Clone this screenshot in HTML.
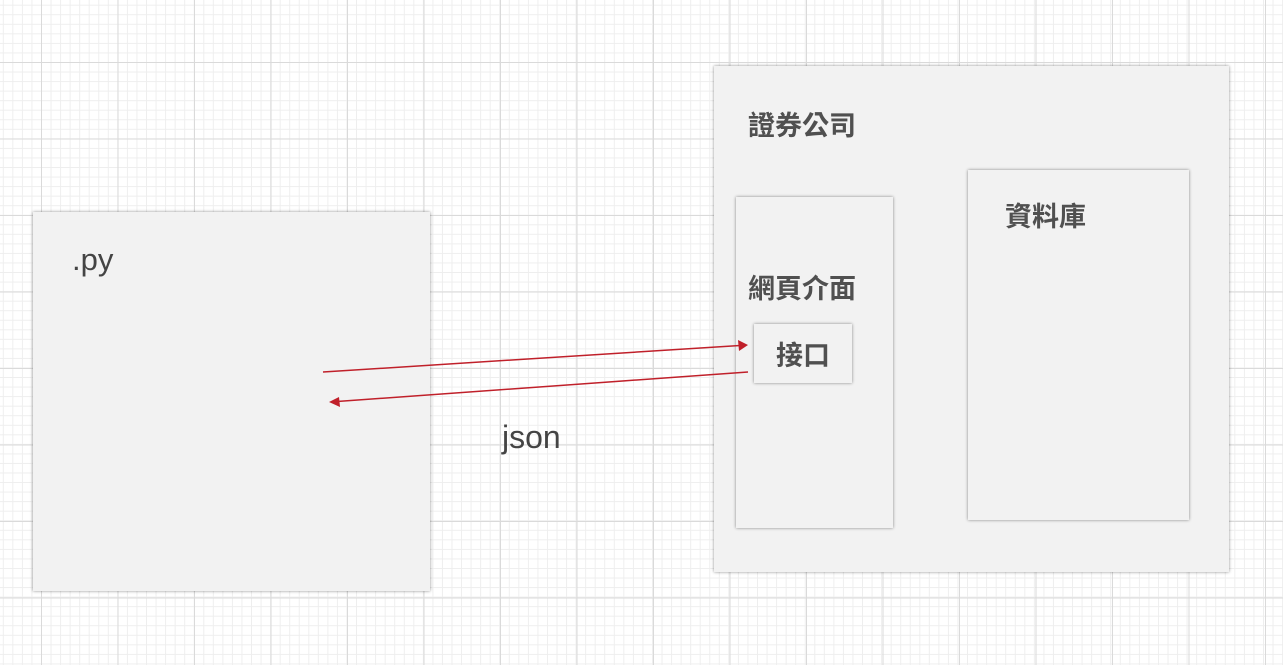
<html><head><style>
body{margin:0;width:1283px;height:665px;overflow:hidden;position:relative;font-family:"Liberation Sans","Noto Sans CJK TC",sans-serif;color:#444;
background-color:#fff;
background-image:linear-gradient(#dadada 1px,transparent 1px),linear-gradient(90deg,#dadada 1px,transparent 1px),linear-gradient(#eeeeee 1px,transparent 1px),linear-gradient(90deg,#eeeeee 1px,transparent 1px);
background-size:76.5px 76.5px,76.5px 76.5px,9.56px 9.56px,9.56px 9.56px;
background-position:41px 62px,41px 62px,41px 62px,41px 62px;}
.b{position:absolute;background:#f2f2f2;box-shadow:0 0 3px rgba(0,0,0,.45);}
.t{position:absolute;font-size:27px;font-weight:600;line-height:1;white-space:nowrap;color:#505050}
</style></head><body>
<div class="b" style="left:33px;top:212px;width:397px;height:379px"></div>
<div class="t" style="left:72px;top:244px;font-size:31px;font-weight:normal;color:#444">.py</div>
<div class="b" style="left:714px;top:66px;width:515px;height:506px"></div>
<div class="t" style="left:748px;top:113px">證券公司</div>
<div class="b" style="left:736px;top:197px;width:157px;height:331px"></div>
<div class="t" style="left:748px;top:276px">網頁介面</div>
<div class="b" style="left:968px;top:170px;width:221px;height:350px"></div>
<div class="t" style="left:1005px;top:204px">資料庫</div>
<div class="b" style="left:754px;top:324px;width:98px;height:59px"></div>
<div class="t" style="left:776px;top:343px">接口</div>
<div class="t" style="left:502px;top:421px;font-size:32px;font-weight:normal;color:#444">json</div>
<svg style="position:absolute;left:0;top:0" width="1283" height="665">
<line x1="323" y1="372" x2="740" y2="345.5" stroke="#c0202a" stroke-width="1.5"/>
<polygon points="748,345 738,340 739,351" fill="#c0202a"/>
<line x1="748" y1="372" x2="337" y2="401.5" stroke="#c0202a" stroke-width="1.5"/>
<polygon points="329,402 339,397 340,407" fill="#c0202a"/>
</svg>
</body></html>
